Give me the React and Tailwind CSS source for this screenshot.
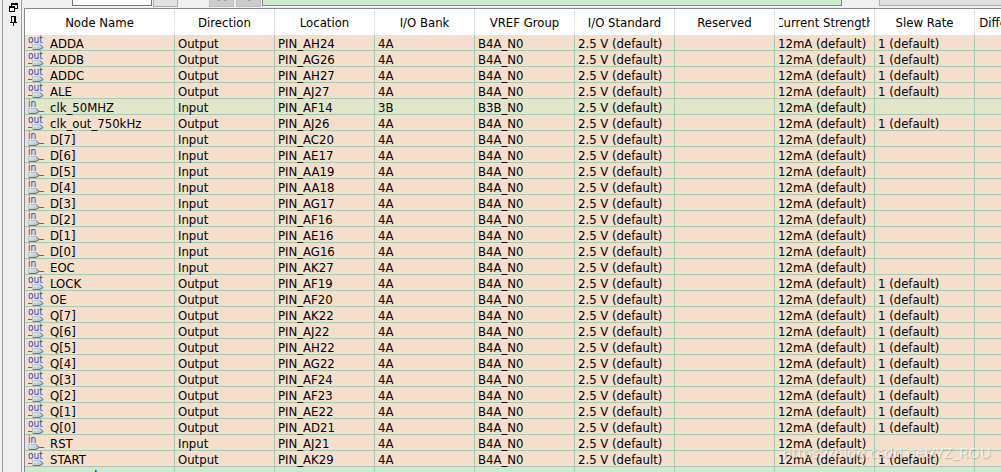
import clsx from "clsx";

const COLUMNS = [
  "Node Name",
  "Direction",
  "Location",
  "I/O Bank",
  "VREF Group",
  "I/O Standard",
  "Reserved",
  "Current Strength",
  "Slew Rate",
  "Differential Pair",
];

// [node name, direction, location, bank]
const NODES = [
  ["ADDA", "Output", "PIN_AH24", "4A"],
  ["ADDB", "Output", "PIN_AG26", "4A"],
  ["ADDC", "Output", "PIN_AH27", "4A"],
  ["ALE", "Output", "PIN_AJ27", "4A"],
  ["clk_50MHZ", "Input", "PIN_AF14", "3B"],
  ["clk_out_750kHz", "Output", "PIN_AJ26", "4A"],
  ["D[7]", "Input", "PIN_AC20", "4A"],
  ["D[6]", "Input", "PIN_AE17", "4A"],
  ["D[5]", "Input", "PIN_AA19", "4A"],
  ["D[4]", "Input", "PIN_AA18", "4A"],
  ["D[3]", "Input", "PIN_AG17", "4A"],
  ["D[2]", "Input", "PIN_AF16", "4A"],
  ["D[1]", "Input", "PIN_AE16", "4A"],
  ["D[0]", "Input", "PIN_AG16", "4A"],
  ["EOC", "Input", "PIN_AK27", "4A"],
  ["LOCK", "Output", "PIN_AF19", "4A"],
  ["OE", "Output", "PIN_AF20", "4A"],
  ["Q[7]", "Output", "PIN_AK22", "4A"],
  ["Q[6]", "Output", "PIN_AJ22", "4A"],
  ["Q[5]", "Output", "PIN_AH22", "4A"],
  ["Q[4]", "Output", "PIN_AG22", "4A"],
  ["Q[3]", "Output", "PIN_AF24", "4A"],
  ["Q[2]", "Output", "PIN_AF23", "4A"],
  ["Q[1]", "Output", "PIN_AE22", "4A"],
  ["Q[0]", "Output", "PIN_AD21", "4A"],
  ["RST", "Input", "PIN_AJ21", "4A"],
  ["START", "Output", "PIN_AK29", "4A"],
];

/* pin symbol: red wire on the left for outputs, on the right for inputs */
function PinIcon({ output }) {
  return (
    <svg width="16" height="15" viewBox="0 0 16 15" className="shrink-0" aria-hidden="true">
      <defs>
        <linearGradient id="pin" x1="0" y1="0" x2="1" y2="1">
          <stop offset="0" stopColor="#eef2f4" />
          <stop offset="1" stopColor="#a3b3bd" />
        </linearGradient>
      </defs>
      <text x="0" y="7.5" fontSize="10" fill="#2448c0">
        {output ? "out" : "in"}
      </text>
      <path d={output ? "M0 12.5H4" : "M11 12.5H16"} stroke="#dd3838" />
      <g transform={output ? "translate(4 9)" : "translate(0 9)"}>
        <path d="M.5 .5H8L11 3.5L8 5.5H.5Z" fill="url(#pin)" stroke="#a9b7c1" strokeWidth=".8" />
        <path d="M8 .5L11.2 3.5L8 5.5H1" fill="none" stroke="#53636f" strokeWidth=".8" />
      </g>
    </svg>
  );
}

function Cell({ children }) {
  return <td className="border-r border-b border-[#a6c9b2] p-0 pt-0.5 pl-[3px] leading-[13px]">{children}</td>;
}

function NodeRow({ node }) {
  const [name, direction, location, bank] = node;
  const output = direction === "Output";
  return (
    <tr className={clsx("h-4", bank === "3B" ? "bg-[#e3e5ca]" : "bg-[#f4dfcc]")}>
      <Cell>
        <div className="flex h-[13px] items-end gap-1.5">
          <PinIcon output={output} />
          <span>{name}</span>
        </div>
      </Cell>
      <Cell>{direction}</Cell>
      <Cell>{location}</Cell>
      <Cell>{bank}</Cell>
      <Cell>{`B${bank}_N0`}</Cell>
      <Cell>2.5 V (default)</Cell>
      <Cell />
      <Cell>12mA (default)</Cell>
      <Cell>{output && "1 (default)"}</Cell>
      <Cell />
    </tr>
  );
}

function SideBar() {
  return (
    <aside className="flex w-[19px] shrink-0 flex-col items-center gap-1 border-r border-[#a0a0a0] pt-[3px] pl-[3px]">
      <button aria-label="Float panel" className="flex">
        <svg width="9" height="9" viewBox="0 0 9 9" fill="none" stroke="#000" shapeRendering="crispEdges">
          <path d="M2.5 3V.5H8.5V5.5H6M2 1.5H9M.5 3.5H5.5V8.5H.5ZM0 4.5H6" />
        </svg>
      </button>
      <button aria-label="Pin panel" className="flex">
        <svg width="7" height="10" viewBox="0 0 7 10" fill="none" stroke="#000" shapeRendering="crispEdges">
          <path d="M1.5 6V.5H5.5V6M4.5 1V6M0 6.5H7M3.5 7V10" />
        </svg>
      </button>
    </aside>
  );
}

/* lower edge of the filter bar that sits above the pin list */
function FilterBar() {
  return (
    <div className="flex h-2 shrink-0 items-start">
      <input aria-label="Named" className="ml-12 h-1.5 w-20 shrink-0 border border-t-0 border-[#7a7a7a] bg-white" />
      <button aria-label="Filter list" className="ml-px h-[7px] w-[25px] shrink-0 border border-t-0 border-[#adb2ad] bg-[#e1e1e1]" />
      <button aria-label="Cancel edit" className="ml-[31px] flex h-[7px] w-[25px] shrink-0 justify-center gap-1 border border-t-0 border-[#bfbfbf] bg-[#cccccc]">
        <span className="h-px w-0.5 bg-[#9a9a9a]" />
        <span className="h-px w-0.5 bg-[#9a9a9a]" />
      </button>
      <button aria-label="Accept edit" className="ml-0.5 flex h-[7px] w-[25px] shrink-0 justify-center border border-t-0 border-[#bfbfbf] bg-[#cccccc]">
        <span className="h-px w-0.5 bg-[#9a9a9a]" />
      </button>
      <input aria-label="Edit" className="ml-px h-1.5 w-[580px] shrink-0 border border-t-0 border-[#828790] bg-[#cce8cf]" />
      <button aria-label="Filter" className="ml-[37px] h-1.5 grow border-b border-l border-[#adadad] bg-[#e1e1e1]" />
    </div>
  );
}

export default function App() {
  return (
    <div className="relative flex h-screen overflow-hidden bg-[#f0f0f0] font-['DejaVu_Sans_Condensed','DejaVu_Sans',sans-serif] text-[13px] leading-[15px] font-normal text-black">
      <div className="w-[3px] shrink-0 border-r border-[#a0a0a0]" />
      <SideBar />
      <main className="ml-0.5 flex min-w-0 grow flex-col">
        <FilterBar />
        <div className="grow overflow-hidden border-t border-l border-[#828790] bg-[#cce8cf]">
          <table className="w-[1050px] table-fixed border-separate border-spacing-0 whitespace-nowrap">
            <thead>
              <tr className="h-[26px] bg-white">
                {COLUMNS.map((title) => (
                  <th key={title} className={clsx("border-r border-[#e2e2e2] px-1 font-normal", title === "Node Name" ? "w-[150px]" : "w-[100px]")}>
                    <div className="flex justify-center overflow-hidden">{title}</div>
                  </th>
                ))}
              </tr>
            </thead>
            <tbody>
              {NODES.map((node) => (
                <NodeRow key={node[0]} node={node} />
              ))}
              <tr className="h-4">
                <Cell>{"<<new node>>"}</Cell>
                {COLUMNS.slice(1).map((title) => (
                  <Cell key={title} />
                ))}
              </tr>
            </tbody>
          </table>
        </div>
      </main>
      <p className="absolute right-2.5 bottom-2.5 font-['Noto_Sans',sans-serif] text-[15px] leading-5 text-white/60 [text-shadow:1px_1px_1px_rgb(0_0_0/0.2)]">
        https://blog.csdn.net/YZ_ROU
      </p>
    </div>
  );
}
